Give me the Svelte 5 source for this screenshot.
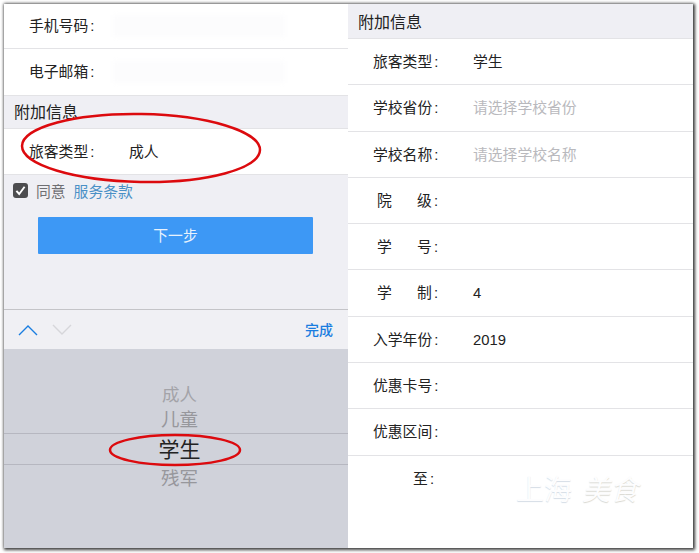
<script>
	const rightRows = [
		{ label: '旅客类型', value: '学生' },
		{ label: '学校省份', hint: '请选择学校省份' },
		{ label: '学校名称', hint: '请选择学校名称' },
		{ label: '院', tail: '级' },
		{ label: '学', tail: '号' },
		{ label: '学', tail: '制', value: '4' },
		{ label: '入学年份', value: '2019' },
		{ label: '优惠卡号' },
		{ label: '优惠区间' }
	];
	const picker = ['成人', '儿童', '学生', '残军'];
</script>

<div class="page">
	<div class="shot">
		<section class="left">
			<div class="row first"><span class="label">手机号码<i>:</i></span><span class="blur"></span></div>
			<div class="row second"><span class="label">电子邮箱<i>:</i></span><span class="blur"></span></div>
			<h2 class="head">附加信息</h2>
			<div class="row type">
				<span class="label">旅客类型<i>:</i></span>
				<span class="value">成人</span>
			</div>
			<div class="agree">
				<svg class="check" viewBox="0 0 15 15" width="15" height="15">
					<rect width="15" height="15" rx="3" fill="#4d4d4f" />
					<path d="M3.4 7.8 6.2 11 11.6 3.8" fill="none" stroke="#fff" stroke-width="1.9" />
				</svg>
				<span class="agree-text">同意</span>
				<span class="terms">服务条款</span>
			</div>
			<div class="btn">下一步</div>
			<div class="spacer"></div>
			<div class="toolbar">
				<svg viewBox="0 0 20 12" width="20" height="12">
					<path d="M1 11 10 2l9 9" fill="none" stroke="#1a7de0" stroke-width="1.4" />
				</svg>
				<svg class="down" viewBox="0 0 20 12" width="20" height="12">
					<path d="M1 1l9 9 9-9" fill="none" stroke="#d6d6da" stroke-width="1.4" />
				</svg>
				<span class="done">完成</span>
			</div>
			<div class="wheel">
				<div class="items">
					{#each picker as item, i}
						<div class="item" class:top={i === 0} class:picked={i === 2}>{item}</div>
					{/each}
				</div>
			</div>
			<svg class="marks" viewBox="0 0 344 544" width="344" height="544">
				<ellipse cx="137" cy="144" rx="119" ry="34" transform="rotate(1 137 144)" />
				<ellipse cx="171" cy="446" rx="65" ry="15" />
			</svg>
		</section>

		<section class="right">
			<h2 class="head top">附加信息</h2>
			{#each rightRows as row}
				<div class="row">
					{#if row.tail}
						<span class="label split"><b>{row.label}</b><b>{row.tail}<i>:</i></b></span>
					{:else}
						<span class="label">{row.label}<i>:</i></span>
					{/if}
					{#if row.value}<span class="value">{row.value}</span>{/if}
					{#if row.hint}<span class="hint">{row.hint}</span>{/if}
				</div>
			{/each}
			<div class="row last"><span class="label to">至<i>:</i></span></div>
			<div class="mark"><span>上海</span><em>美食</em></div>
		</section>
	</div>
</div>

<style>
	:global(body) {
		background: #fff;
	}

	.page {
		width: 699px;
		height: 553px;
		padding: 4px 6px 5px 4px;
		box-sizing: border-box;
		font-family: "Liberation Sans", "Noto Sans CJK SC", sans-serif;
		color: #222;
		font-size: 14.8px;
		overflow: hidden;
	}

	.shot {
		display: flex;
		height: 544px;
		background: #fff;
		box-shadow: 1px 1px 3px 1px rgba(0, 0, 0, 0.75), 0 -1px 3px rgba(0, 0, 0, 0.25);
	}

	.left {
		position: relative;
		width: 344px;
		display: flex;
		flex-direction: column;
		background: #efeff4;
	}

	.right {
		position: relative;
		width: 345px;
		background: #fff;
	}

	.row {
		display: flex;
		align-items: baseline;
		height: 46.3px;
		line-height: 46px;
		box-sizing: border-box;
		padding-left: 25px;
		background: #fff;
		border-bottom: 1px solid #e3e3e6;
	}

	.first {
		height: 45px;
		line-height: 44px;
	}

	.second {
		height: 47px;
		line-height: 46px;
	}

	.type {
		height: 46px;
		line-height: 46px;
	}

	.label {
		width: 100px;
		flex: none;
	}

	.label i {
		font-style: normal;
		margin-left: 2px;
	}

	.split {
		display: flex;
		justify-content: space-between;
		box-sizing: border-box;
		width: 65px;
		margin-right: 35px;
		padding-left: 4px;
	}

	.split b {
		font-weight: 400;
	}

	.blur {
		align-self: center;
		width: 172px;
		height: 22px;
		margin-left: -16px;
		background: #fcfcfd;
		filter: blur(2px);
	}

	.value {
		color: #222;
	}

	.hint {
		color: #b9b9bd;
	}

	.head {
		margin: 0;
		height: 33px;
		line-height: 34px;
		box-sizing: border-box;
		padding-left: 10px;
		font-size: 16px;
		font-weight: 400;
		background: #efeff4;
		border-bottom: 1px solid #e3e3e6;
	}

	.head.top {
		height: 35px;
		line-height: 37px;
	}

	.last {
		height: 47px;
		border: 0;
		line-height: 46px;
	}

	.to {
		text-align: right;
		width: 61px;
	}

	.agree {
		display: flex;
		align-items: center;
		height: 31px;
		padding-left: 9px;
	}

	.agree-text {
		margin-left: 8px;
		color: #6f6f73;
	}

	.terms {
		margin-left: 8px;
		color: #4a90c6;
	}

	.btn {
		margin: 11px 0 0 34px;
		width: 275px;
		height: 37px;
		line-height: 38px;
		text-align: center;
		color: #e8f2fd;
		background: #3d98f5;
		border-radius: 1px;
	}

	.spacer {
		flex: 1;
	}

	.toolbar {
		display: flex;
		align-items: center;
		height: 40px;
		box-sizing: border-box;
		padding: 0 16px 0 14px;
		background: #f0f0f4;
		border-top: 1px solid #c4c4c8;
	}

	.down {
		margin-left: 14px;
	}

	.done {
		margin: -1px -1px 0 auto;
		color: #1a7de0;
		font-size: 14px;
		font-weight: 500;
	}

	.wheel {
		height: 199px;
		background: #d0d2da;
	}

	.items {
		padding-top: 34px;
		text-align: center;
	}

	.item {
		height: 27px;
		line-height: 27px;
		padding-left: 7px;
		font-size: 18.5px;
		color: #97979c;
	}

	.item.top {
		height: 23px;
		line-height: 25px;
		font-size: 17.5px;
		color: #a3a3a8;
	}

	.item.picked {
		height: 30px;
		line-height: 32px;
		font-size: 21px;
		color: #222;
		border-top: 1px solid #b6b7c0;
		border-bottom: 1px solid #b6b7c0;
	}

	.marks {
		position: absolute;
		left: 0;
		top: 0;
		pointer-events: none;
	}

	.marks ellipse {
		fill: none;
		stroke: #dc0a0e;
		stroke-width: 2.5;
	}

	.mark {
		position: absolute;
		left: 168px;
		top: 464px;
		display: flex;
		align-items: center;
		gap: 10px;
		color: #fdfdfe;
		font-size: 28px;
		text-shadow: 0 1px 1px #d5dde6;
	}

	.mark em {
		font-family: "Liberation Serif", "Noto Sans CJK SC", serif;
		font-size: 28px;
		text-shadow: 0 1px 1px #d8d8d2;
	}
</style>
